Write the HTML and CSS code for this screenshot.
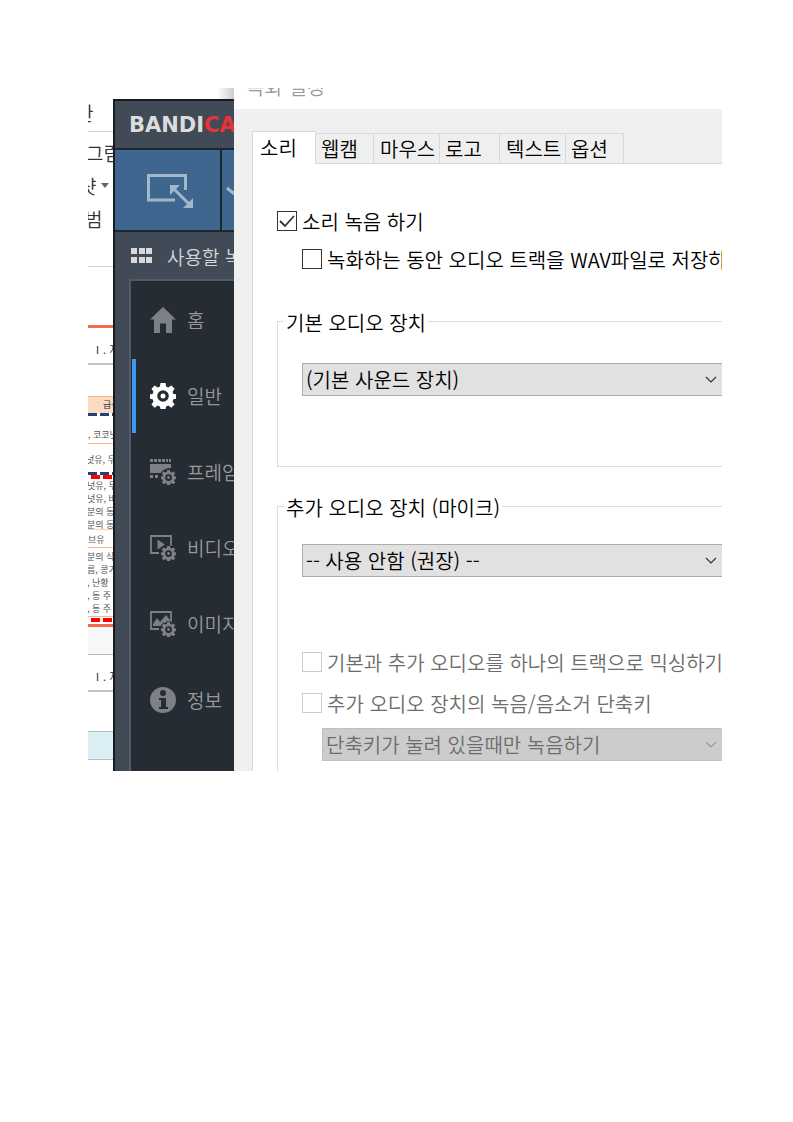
FILE: index.html
```html
<!DOCTYPE html>
<html lang="ko">
<head>
<meta charset="utf-8">
<meta name="viewport" content="width=device-width, initial-scale=1">
<title>녹화 설정</title>
<link rel="stylesheet" href="styles.css">
</head>
<body>
<main class="desktop">
  <section class="doc" aria-label="문서">
    <div class="doc-top"><span class="cut-most">관</span></div>
    <div class="doc-tools">
      <p><span class="cut-edge">그림</span></p>
      <p><span class="cut-half">샷</span><svg class="drop" viewBox="0 0 8 5" aria-hidden="true"><path d="M0 0h8L4 5z" fill="#666"/></svg></p>
      <p><span class="cut-some">범</span>&nbsp; -</p>
    </div>
    <div class="doc-space"></div>
    <h2 class="doc-head accent-top">Ⅰ. 지</h2>
    <div class="doc-gap"></div>
    <div class="cell-head">급식</div>
    <div class="dash navy"></div>
    <div class="cell first">, 코코넛</div>
    <div class="cell second">넛유, 두</div>
    <div class="dash navy"></div>
    <div class="dash red"></div>
    <div class="cell group"><p>넛유, 두</p><p>넛유, 바</p><p>분의 동</p><p>분의 동</p></div>
    <div class="cell single">브유</div>
    <div class="cell group five"><p>분의 식</p><p>름, 콩기</p><p>, 난황</p><p>, 등 주</p><p>, 등 주</p></div>
    <div class="dash red end"></div>
    <div class="doc-band"></div>
    <h2 class="doc-head second-head">Ⅰ. 지</h2>
    <div class="doc-gap tall"></div>
    <div class="blue-cell"></div>
  </section>

  <section class="app" aria-label="Bandicam">
    <div class="app-shade"></div>
    <div class="app-window">
      <h1 class="logo">BANDI<span>CAM</span></h1>
      <div class="modes">
        <button class="mode" type="button" aria-label="사각형 영역">
          <svg viewBox="0 0 46 34" width="46" height="34" fill="none">
            <path d="M28 26H1.500V1.500H38.500V16" stroke="#a3b7cb" stroke-width="3"/>
            <path d="M27 15L42 30" stroke="#a3b7cb" stroke-width="3"/>
            <path d="M23 11h10L23 21zM46 24v10H36z" fill="#a3b7cb"/>
          </svg>
        </button>
        <button class="mode more" type="button" aria-label="모드 선택">
          <svg viewBox="0 0 14 8" width="14" height="8" fill="none"><path d="M1 1l6 5 6-5" stroke="#a3b7cb" stroke-width="3"/></svg>
        </button>
      </div>
      <div class="target">
        <svg viewBox="0 0 21 15" width="21" height="15" fill="#d9d9d9" aria-hidden="true"><path d="M0 0h6v6H0zM8 0h6v6H8zM15 0h6v6h-6zM0 9h6v6H0zM8 9h6v6H8zM15 9h6v6h-6z"/></svg>
        <span>사용할 녹화</span>
      </div>
      <nav class="menu">
        <button type="button" class="item">
          <svg viewBox="0 0 26 26" fill="#7d8085"><path d="M13 0L26 12.500H22V26H16V16.500H10V26H4V12.500H0z"/></svg><span>홈</span>
        </button>
        <button type="button" class="item on">
          <svg viewBox="0 0 26 26"><use href="#gear" fill="#fff"/></svg><span>일반</span>
        </button>
        <button type="button" class="item">
          <svg viewBox="0 0 26 26" fill="#7d8085"><path d="M0 0h3v3H0zM4 0h3v3H4zM8 0h3v3H8zM12 0h3v3h-3zM16 0h2v3h-2zM19 0h2v3h-2zM0 5h21v4Q14 9 11 14H0zM0 16h3v3H0zM5 16h3v3H5z"/><use class="badge" href="#gear" transform="translate(11 11) scale(.58)"/></svg><span>프레임</span>
        </button>
        <button type="button" class="item">
          <svg viewBox="0 0 26 26" fill="#7d8085"><path d="M9 18H1V1h20v10" fill="none" stroke="#7d8085" stroke-width="1.800"/><path d="M7.500 4.500l7.500 5-7.500 5z"/><use class="badge" href="#gear" transform="translate(11 11) scale(.58)"/></svg><span>비디오</span>
        </button>
        <button type="button" class="item">
          <svg viewBox="0 0 26 26" fill="#7d8085"><path d="M9 18H1V1h20v10" fill="none" stroke="#7d8085" stroke-width="1.800"/><path d="M3 15V13L7 7l3 4 6-7 4 5v2q-6 0-9 4z"/><use class="badge" href="#gear" transform="translate(11 11) scale(.58)"/></svg><span>이미지</span>
        </button>
        <button type="button" class="item">
          <svg viewBox="0 0 26 26"><circle cx="13" cy="13" r="13" fill="#7d8085"/><circle cx="13" cy="6" r="3" fill="#252c33"/><path d="M9 11h7v9h2v2H9v-2h2v-7H9z" fill="#252c33"/></svg><span>정보</span>
        </button>
      </nav>
    </div>
  </section>

  <section class="dialog" aria-label="녹화 설정">
    <header class="dialog-title"><span>녹화 설정</span></header>
    <div class="dialog-body">
      <div class="tabs" role="tablist">
        <button type="button" role="tab" aria-selected="true" class="tab selected">소리</button>
        <button type="button" role="tab" class="tab narrow">웹캠</button>
        <button type="button" role="tab" class="tab wide">마우스</button>
        <button type="button" role="tab" class="tab medium">로고</button>
        <button type="button" role="tab" class="tab wide">텍스트</button>
        <button type="button" role="tab" class="tab narrow">옵션</button>
      </div>
      <form class="panel">
        <label class="check"><input type="checkbox" checked><span>소리 녹음 하기</span></label>
        <label class="check inset"><input type="checkbox"><span>녹화하는 동안 오디오 트랙을 WAV파일로 저장하기</span></label>
        <fieldset class="device main-device">
          <legend>기본 오디오 장치</legend>
          <select aria-label="기본 오디오 장치"><option>(기본 사운드 장치)</option></select>
        </fieldset>
        <fieldset class="device extra-device">
          <legend>추가 오디오 장치 (마이크)</legend>
          <select aria-label="추가 오디오 장치"><option>-- 사용 안함 (권장) --</option></select>
          <label class="check mix"><input type="checkbox" disabled><span>기본과 추가 오디오를 하나의 트랙으로 믹싱하기</span></label>
          <label class="check"><input type="checkbox" disabled><span>추가 오디오 장치의 녹음/음소거 단축키</span></label>
          <select class="hotkey" aria-label="단축키 동작" disabled><option>단축키가 눌려 있을때만 녹음하기</option></select>
        </fieldset>
      </form>
    </div>
  </section>
</main>
<svg class="defs" aria-hidden="true"><defs>
  <path id="gear" fill-rule="evenodd" d="M10.500 0h5l.6 3.600 2.200.9 3-2.100 3.300 3.300-2.100 3 .9 2.200 2.600.4v4.400l-2.600.5-.9 2.200 2.100 3-3.300 3.300-3-2.100-2.200.9-.6 2.400h-5l-.6-2.400-2.200-.9-3 2.100-3.300-3.300 2.100-3-.9-2.200L0 15.700v-4.400l2.600-.4.900-2.200-2.100-3 3.300-3.300 3 2.100 2.200-.9zM13 7.200a5.800 5.800 0 1 0 0 11.600 5.800 5.800 0 0 0 0-11.600zM13 10.500a2.500 2.500 0 1 1 0 5 2.500 2.500 0 0 1 0-5z"/>
</defs></svg>
</body>
</html>
```
FILE: styles.css
```css
* { box-sizing: border-box; }

body {
  margin: 0;
  background: #fff;
  color: #000;
  font: 20px/28px "Noto Sans CJK KR", sans-serif;
  font-weight: 350;
}

button, select { font: inherit; color: inherit; }
h1, h2, p { margin: 0; }
.defs { position: absolute; width: 0; height: 0; }

.desktop {
  display: grid;
  grid-template-columns: 25px 121px minmax(0, 1fr);
  margin: 88px 71px 88px 88px;
}
.doc, .app, .dialog { overflow: hidden; min-width: 0; white-space: nowrap; }

/* Document behind the windows */
.doc { color: #333; font-size: 19px; }
.doc-top { height: 44px; padding-top: 11px; border-bottom: 1px solid #d2d2d2; }
.cut-most { margin-left: -12px; }
.cut-half { margin-left: -9px; }
.cut-some { margin-left: -3px; }
.cut-edge { margin-left: -2px; }
.doc-tools { height: 135px; padding-top: 4px; border-bottom: 1px solid #d2d2d2; }
.doc-tools p { height: 33px; line-height: 33px; display: flex; align-items: center; }
.drop { width: 8px; height: 5px; margin-left: 5px; flex: none; }
.doc-space { height: 58px; }
.doc-head {
  height: 40px;
  padding: 7px 0 0 4px;
  font-size: 11px;
  line-height: 28px;
  font-weight: 400;
  border-bottom: 2px solid #bfc5c4;
}
.accent-top { border-top: 3px solid #f4694c; }
.doc-gap { height: 31px; }
.cell-head {
  height: 17px;
  padding-left: 15px;
  border-top: 1px solid #f8b58b;
  background: #fddbc3;
  font-size: 9px;
  line-height: 16px;
  font-weight: 400;
}
.dash { height: 3px; }
.navy { background: repeating-linear-gradient(90deg, #1f4379 0 9px, transparent 9px 12px); }
.red { height: 4px; background: repeating-linear-gradient(90deg, transparent 0 3px, #f00 3px 12px); }
.cell { font: 9px/13px "Noto Sans CJK KR", sans-serif; border-bottom: 1px solid #f8b58b; color: #555; }
.first { height: 28px; padding-top: 12px; }
.second { height: 28px; padding-top: 9px; border-bottom: 0; text-indent: -2px; }
.group { height: 51px; border-bottom-color: #fbd0b4; text-indent: -1px; }
.single { height: 18px; padding-top: 3px; }
.five { height: 69px; padding-top: 2px; border-bottom-color: #f8b58b; }
.end { margin-top: 1px; }
.doc-band { height: 31px; margin-top: 2px; border-top: 3px solid #f4694c; border-bottom: 1px solid #bbb; background: #f7f7f7; }
.second-head { height: 37px; }
.tall { height: 39px; }
.blue-cell { height: 29px; border: solid #aebfc5; border-width: 1px 0; background: #daeef3; }

/* Recorder window */
.app { display: flex; flex-direction: column; }
.app-shade { height: 11px; background: linear-gradient(90deg, transparent 104px, #ccc 121px); }
.app-window {
  flex: 1;
  display: flex;
  flex-direction: column;
  border: solid #171c22;
  border-width: 2px 0 0 2px;
  background: #414b57;
  color: #d6d6d6;
}
.logo {
  height: 49px;
  padding-left: 14px;
  border-bottom: 2px solid #20262d;
  color: #dcdcdc;
  font: bold 21px/49px "DejaVu Sans", sans-serif;
}
.logo span { color: #e93338; }
.modes { display: flex; gap: 2px; height: 82px; border-bottom: 2px solid #20262d; background: #20262d; }
.mode {
  flex: none;
  width: 105px;
  padding: 2px 0 0 4px;
  border: 0;
  background: #3f668f;
  display: flex;
  align-items: center;
  justify-content: center;
}
.more { width: 40px; justify-content: flex-start; }
.target {
  height: 47px;
  padding-left: 16px;
  display: flex;
  align-items: center;
  gap: 15px;
  font-size: 19px;
}
.target svg { flex: none; }
.target span { padding-top: 3px; }
.menu {
  flex: 1;
  margin-left: 14px;
  padding-top: 1px;
  border: solid #525c69;
  border-width: 2px 0 0 2px;
  background: #252c33;
}
.item {
  width: 100%;
  height: 76px;
  padding: 0 0 0 15px;
  border: 0;
  border-left: 4px solid transparent;
  background: none;
  color: #999;
  display: flex;
  align-items: center;
  gap: 11px;
  font-size: 19px;
}
.item svg { width: 26px; height: 26px; flex: none; }
.badge { stroke: #252c33; stroke-width: 3px; paint-order: stroke; }
.on {
  background: linear-gradient(#3c9af5, #3c9af5) 1px 50% / 4px 74px no-repeat border-box;
}

/* Recording settings dialog */
.dialog { background: #efefef; }
.dialog-title {
  height: 21px;
  padding-left: 12px;
  overflow: hidden;
  background: #fff;
  color: #999;
}
.dialog-title span { display: block; margin-top: -15px; }
.dialog-body { padding: 22px 0 0 18px; }
.tabs { display: flex; align-items: flex-end; }
.tabs::after { content: ""; flex: 1; height: 1px; background: #d9d9d9; }
.tab {
  height: 31px;
  padding: 1px 0 0 5px;
  border: 1px solid #d9d9d9;
  border-left: 0;
  background: #efefef;
  text-align: left;
}
.selected {
  width: 64px;
  height: 33px;
  padding: 0 0 0 7px;
  border-left: 1px solid #d9d9d9;
  border-bottom: 0;
  background: #fff;
}
.narrow { width: 58px; }
.medium { width: 60px; }
.wide { width: 66px; padding-left: 6px; }

.panel {
  padding: 43px 0 0 24px;
  border-left: 1px solid #d9d9d9;
  background: #fff;
}
.check { display: flex; align-items: center; gap: 5px; height: 28px; }
.check span { padding-top: 2px; }
.inset { margin: 10px 0 0 25px; }
.check input {
  appearance: none;
  flex: none;
  width: 20px;
  height: 20px;
  margin: 0;
  border: 1px solid #333;
  background: #fff;
}
.check input:checked {
  background: #fff url("data:image/svg+xml,%3Csvg xmlns='http://www.w3.org/2000/svg' viewBox='0 0 18 18'%3E%3Cpath d='M2 9l5 5 9-10' fill='none' stroke='%23333' stroke-width='1.800'/%3E%3C/svg%3E");
}
.check input:disabled { border-color: #ccc; }
.check:has(input:disabled) { color: #6d6d6d; }

.device {
  min-width: 0;
  margin: 0;
  padding: 0 0 0 24px;
  border: 1px solid #dcdcdc;
  border-right: 0;
}
.device legend { height: 28px; margin-left: -18px; padding: 2px 2px 0; }
.main-device { margin-top: 34px; padding-top: 28px; padding-bottom: 70px; }
.extra-device { margin-top: 25px; padding-top: 24px; padding-bottom: 10px; border-bottom: 0; }
select {
  display: block;
  appearance: none;
  width: 100%;
  height: 33px;
  padding: 1px 24px 0 3px;
  border: 1px solid #adadad;
  border-right: 0;
  border-radius: 0;
  background: #e1e1e1 url("data:image/svg+xml,%3Csvg xmlns='http://www.w3.org/2000/svg' viewBox='0 0 12 8'%3E%3Cpath d='M1 1l5 5 5-5' fill='none' stroke='%23333' stroke-width='1.200'/%3E%3C/svg%3E") right 5px center / 12px 8px no-repeat;
}
.mix { margin: 71px 0 13px; }
.hotkey {
  width: calc(100% - 20px);
  margin: 11px 0 0 20px;
  border-color: #bfbfbf;
  background: #ccc url("data:image/svg+xml,%3Csvg xmlns='http://www.w3.org/2000/svg' viewBox='0 0 12 8'%3E%3Cpath d='M1 1l5 5 5-5' fill='none' stroke='%23999' stroke-width='1.200'/%3E%3C/svg%3E") right 5px center / 12px 8px no-repeat;
  color: #6d6d6d;
  opacity: 1;
}
```
